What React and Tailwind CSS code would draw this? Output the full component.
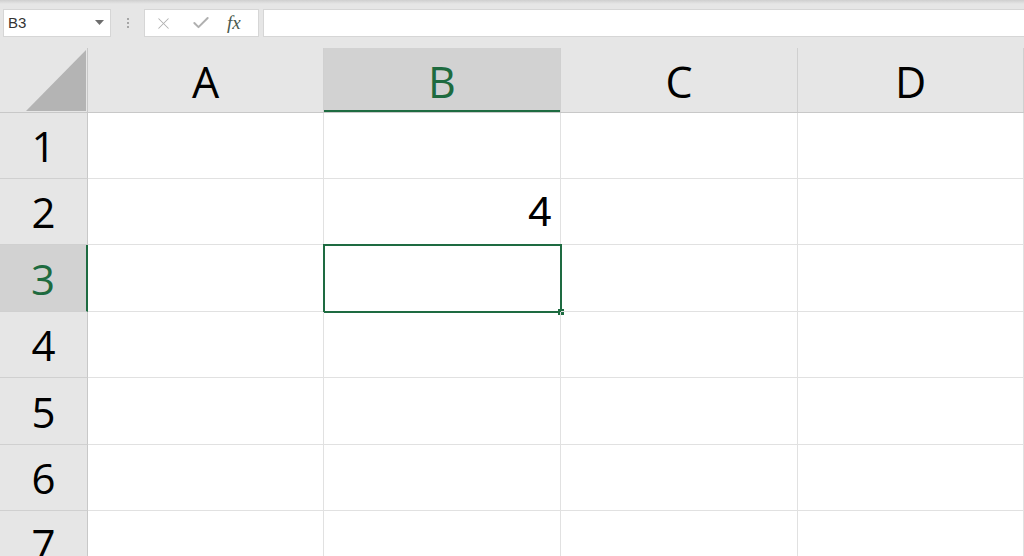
import { X, Check } from 'lucide-react';

const cols = [
    { key: 'A', width: 'w-[236px]' },
    { key: 'B', width: 'w-[237px]', selected: true },
    { key: 'C', width: 'w-[237px]' },
    { key: 'D', width: 'flex-1' },
];

const rows = [
    { n: 1, h: 'h-[66px]' },
    { n: 2, h: 'h-[66px]', values: { B: '4' } },
    { n: 3, h: 'h-[67px]', selected: true },
    { n: 4, h: 'h-[66px]' },
    { n: 5, h: 'h-[67px]' },
    { n: 6, h: 'h-[66px]' },
    { n: 7, h: 'h-[66px]' },
];

const Toolbar = () => (
    <div className="h-[48px] flex items-start pt-[9px] bg-[linear-gradient(#cfcfcf_0px,#e6e6e6_4px)]">
        <div className="ml-[3px] w-[108px] h-[28px] bg-white border border-[#d6d6d6] flex items-center justify-between pl-[4px] pr-[6px]">
            <span className="text-[15px] text-[#333] font-['Liberation_Sans',sans-serif]">B3</span>
            <svg width="9" height="6" viewBox="0 0 9 6"><path d="M0 0h9L4.5 5z" fill="#6d6d6d" /></svg>
        </div>
        <div className="w-[33px] h-[28px] flex flex-col items-center justify-center gap-[2px]">
            <span className="w-[2px] h-[2px] bg-[#a6a6a6]" />
            <span className="w-[2px] h-[2px] bg-[#a6a6a6]" />
            <span className="w-[2px] h-[2px] bg-[#a6a6a6]" />
        </div>
        <div className="w-[115px] h-[28px] bg-white border border-[#d6d6d6] flex items-center">
            <X className="w-[19px] h-[19px] ml-[9px] text-[#b0b0b0]" strokeWidth={1.3} />
            <Check className="w-[20px] h-[20px] ml-[18px] text-[#b0b0b0]" strokeWidth={2.4} />
            <span className="ml-[16px] text-[19px] italic text-[#4a5a4e] font-['Liberation_Serif',serif]">fx</span>
        </div>
        <div className="ml-[4px] flex-1 h-[28px] bg-white border border-[#d6d6d6] border-r-0" />
    </div>
);

const App = () => {
    return (
        <div className="w-[1024px] h-[556px] overflow-hidden bg-white font-['Open_Sans',sans-serif]">
            <Toolbar />

            <div className="flex h-[65px] bg-[#e6e6e6] border-b border-[#c8c8c8]">
                <div className="w-[88px] border-r border-[#c8c8c8] relative">
                    <svg className="absolute left-[26px] top-[2px]" width="60" height="61" viewBox="0 0 60 61">
                        <path d="M0 61L60 0v61z" fill="#b4b4b4" />
                    </svg>
                </div>
                {cols.map((c) => (
                    <div
                        key={c.key}
                        className={`${c.width} flex items-center justify-center text-[43px] leading-none border-r border-[#d0d0d0] ${c.selected ? 'bg-[#d2d2d2] text-[#1e6b3f] shadow-[inset_0_-2px_0_#1e6b41]' : 'text-black'}`}
                    >
                        <span className="mt-[3px]">{c.key}</span>
                    </div>
                ))}
            </div>

            {rows.map((r) => (
                <div key={r.n} className={`flex ${r.h}`}>
                    <div
                        className={`w-[88px] flex items-center justify-center text-[42px] leading-none border-b border-[#d0d0d0] ${r.selected ? 'bg-[#d2d2d2] text-[#1e6b3f] border-r-2 border-r-[#1e6b41]' : 'bg-[#e6e6e6] text-black border-r border-r-[#c8c8c8]'}`}
                    >
                        <span className="mt-[1px]">{r.n}</span>
                    </div>
                    {cols.map((c) => {
                        const active = r.selected && c.selected;
                        return (
                            <div
                                key={c.key}
                                className={`${c.width} relative flex items-center justify-end pr-[8px] border-r border-b border-[#e1e1e1] font-['Liberation_Sans',sans-serif] text-[43px] leading-none`}
                            >
                                {r.values?.[c.key]}
                                {active && (
                                    <div className="absolute -left-[1px] -top-[1px] -right-[2px] -bottom-[2px] border-2 border-[#1e6b41]">
                                        <span className="absolute -right-[4px] -bottom-[4px] w-[6px] h-[6px] bg-[#1e6b41]" />
                                    </div>
                                )}
                            </div>
                        );
                    })}
                </div>
            ))}
        </div>
    );
};

export default App;
